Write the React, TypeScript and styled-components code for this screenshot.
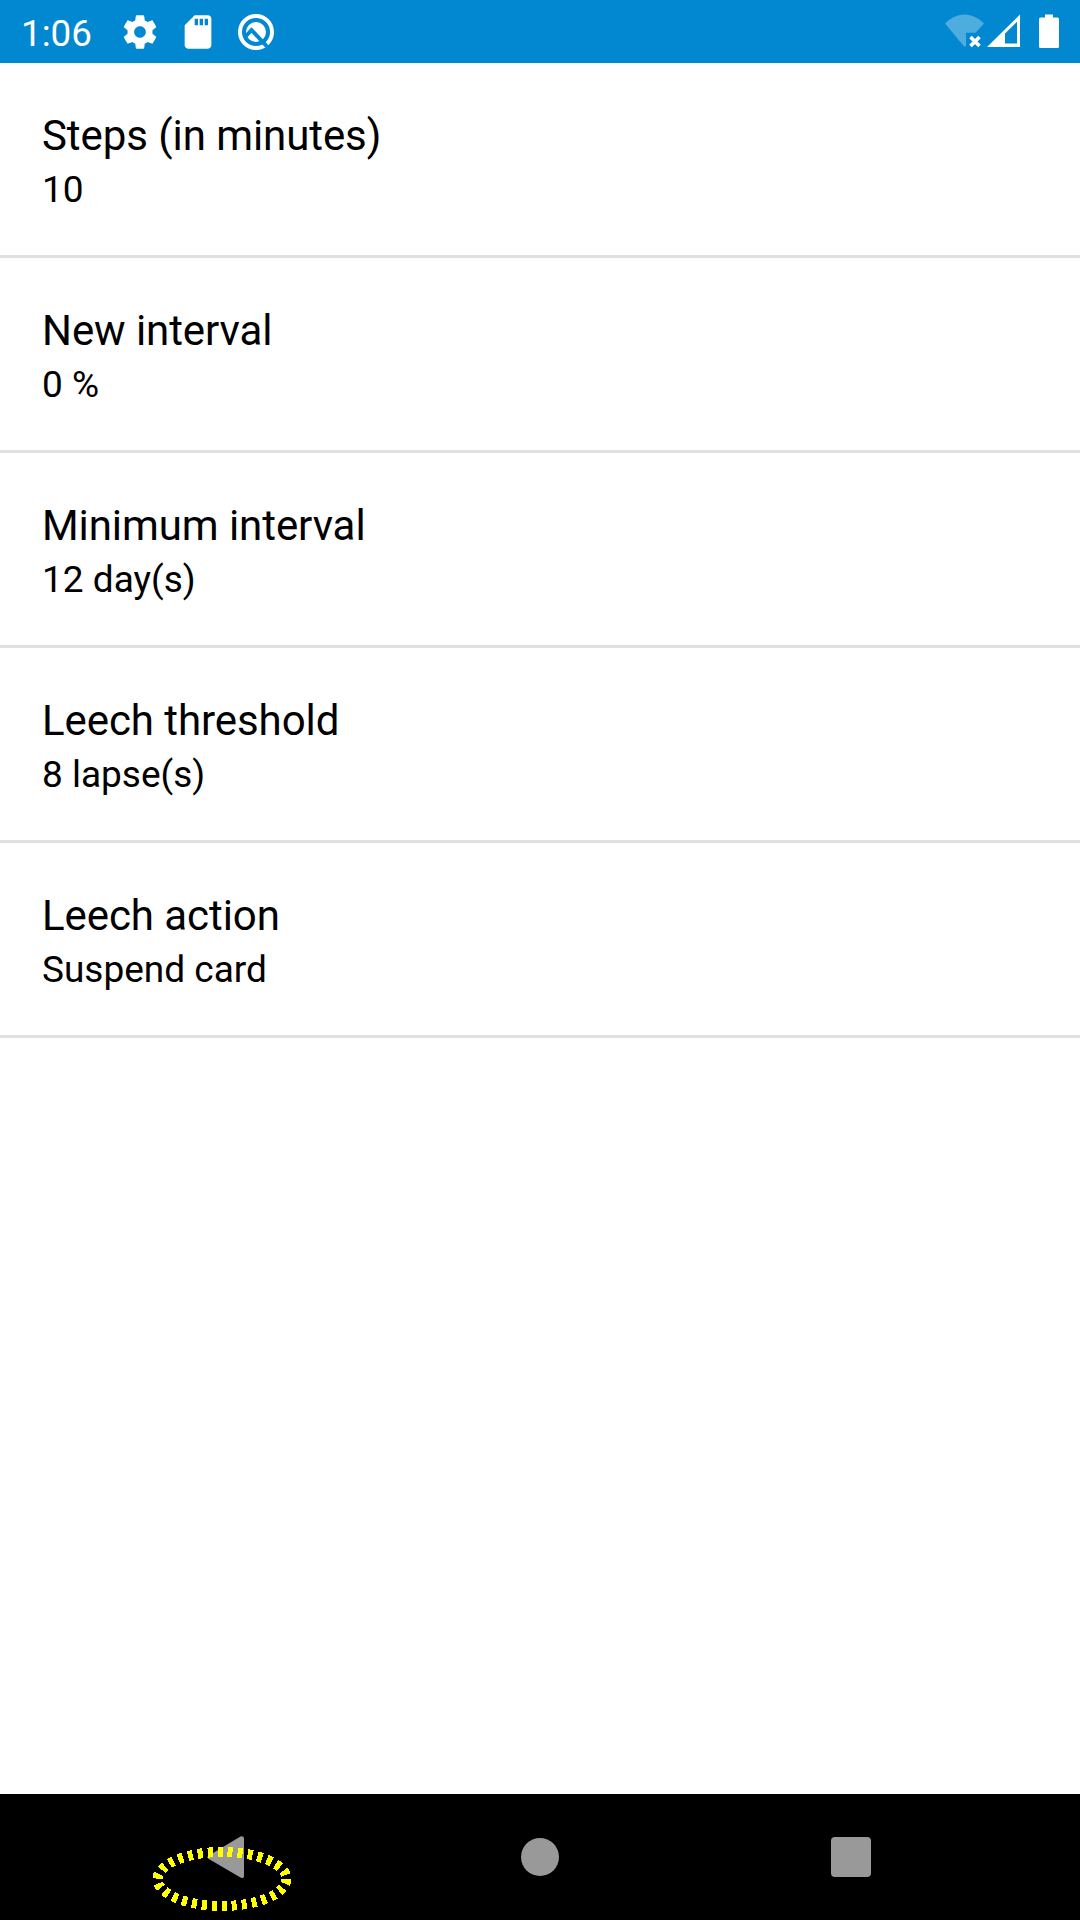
import React from "react";
import styled, { createGlobalStyle } from "styled-components";

const GlobalStyle = createGlobalStyle`
  *, *::before, *::after { box-sizing: border-box; }
  body { margin: 0; background: #fff; }
`;

const Screen = styled.div`
  display: flex;
  flex-direction: column;
  width: 1080px;
  height: 1920px;
  background: #fff;
  color: #000;
  font-family: Roboto, "Noto Sans", sans-serif;
  overflow: hidden;
`;

const StatusBar = styled.header`
  display: flex;
  align-items: center;
  justify-content: space-between;
  height: 63px;
  flex: none;
  padding: 0 21px;
  background: #0288d1;
  color: #fff;
`;

const StatusGroup = styled.div`
  display: flex;
  align-items: center;
  height: 63px;
`;

const Clock = styled.time`
  width: 99px;
  padding-top: 4px;
  font-size: 36.75px;
  line-height: 43px;
  white-space: nowrap;
`;

const StatusIcon = styled.svg<{ $width: number; $gap?: number }>`
  display: block;
  flex: none;
  width: ${(p) => p.$width}px;
  height: 40px;
  margin-left: ${(p) => p.$gap ?? 0}px;
`;

const List = styled.ul`
  flex: 1;
  margin: 0;
  padding: 0;
  list-style: none;
`;

const Preference = styled.li`
  display: flex;
  flex-direction: column;
  height: 195px;
  padding: 48px 42px 0;
  border-bottom: 3px solid #e0e0e0;
`;

const Title = styled.span`
  font-size: 42px;
  line-height: 50px;
  letter-spacing: -0.07px;
`;

const Summary = styled.span`
  margin-top: 7px;
  font-size: 37px;
  line-height: 44px;
`;

const NavBar = styled.nav`
  position: relative;
  display: flex;
  justify-content: center;
  flex: none;
  height: 126px;
  background: #000;
`;

const NavButton = styled.button`
  display: flex;
  align-items: center;
  justify-content: center;
  width: 311px;
  height: 126px;
  padding: 0;
  border: 0;
  background: none;
`;

const NavIcon = styled.svg`
  display: block;
  width: 60px;
  height: 60px;
  fill: #999;
`;

const TapMarker = styled.svg`
  position: absolute;
  left: 146px;
  top: 46px;
  width: 152px;
  height: 78px;
  pointer-events: none;
`;

const preferences = [
  { title: "Steps (in minutes)", summary: "10" },
  { title: "New interval", summary: "0 %" },
  { title: "Minimum interval", summary: "12 day(s)" },
  { title: "Leech threshold", summary: "8 lapse(s)" },
  { title: "Leech action", summary: "Suspend card" },
];

const GearIcon = () => (
  <StatusIcon $width={40} viewBox="0 0 24 24" fill="#fff">
    <path d="M19.43 12.98c.04-.32.07-.64.07-.98s-.03-.66-.07-.98l2.11-1.65c.19-.15.24-.42.12-.64l-2-3.46c-.12-.22-.39-.3-.61-.22l-2.49 1c-.52-.4-1.08-.73-1.69-.98l-.38-2.65C14.46 2.18 14.25 2 14 2h-4c-.25 0-.46.18-.49.42l-.38 2.65c-.61.25-1.17.59-1.69.98l-2.49-1c-.23-.09-.49 0-.61.22l-2 3.46c-.13.22-.07.49.12.64l2.11 1.65c-.04.32-.07.65-.07.98s.03.66.07.98l-2.11 1.65c-.19.15-.24.42-.12.64l2 3.46c.12.22.39.3.61.22l2.49-1c.52.4 1.08.73 1.69.98l.38 2.65c.03.24.24.42.49.42h4c.25 0 .46-.18.49-.42l.38-2.65c.61-.25 1.17-.59 1.69-.98l2.49 1c.23.09.49 0 .61-.22l2-3.46c.12-.22.07-.49-.12-.64l-2.11-1.65zM12 15.5c-1.93 0-3.5-1.57-3.5-3.5s1.57-3.5 3.5-3.5 3.5 1.57 3.5 3.5-1.57 3.5-3.5 3.5z" />
  </StatusIcon>
);

const SdCardIcon = () => (
  <StatusIcon $width={40} $gap={18} viewBox="0 0 24 24" fill="#fff">
    <path d="M18 2h-8L4.02 8 4 20c0 1.100.9 2 2 2h12c1.100 0 2-.9 2-2V4c0-1.100-.9-2-2-2zm-6 6h-2V4h2v4zm3 0h-2V4h2v4zm3 0h-2V4h2v4z" />
  </StatusIcon>
);

const SearchBadgeIcon = () => (
  <StatusIcon $width={40} $gap={18} viewBox="0 0 40 40">
    <circle cx="20" cy="20" r="16" fill="none" stroke="#fff" strokeWidth="4" />
    <circle cx="20" cy="20" r="10" fill="#fff" />
    <path d="M9.5 24.500L15.500 18L30.500 34" fill="none" stroke="#0288d1" strokeWidth="3.900" />
    <path d="M27 30.300L35 38.800" stroke="#0288d1" strokeWidth="3" />
  </StatusIcon>
);

const WifiOffIcon = () => (
  <StatusIcon $width={40} viewBox="0 0 40 40">
    <path d="M0 11.500C5.500 6 12 2.500 19.500 2.500S33.500 6 39 11.500L30.500 20.700H21V33.500L19.500 35Z" fill="#fff" fillOpacity="0.3" />
    <path d="M25.500 25L34.500 34M34.500 25L25.500 34" stroke="#fff" strokeWidth="3.600" />
  </StatusIcon>
);

const SignalIcon = () => (
  <StatusIcon $width={33} $gap={2} viewBox="0 0 33 40">
    <path d="M0 35L33 2.500V35ZM18 21.500V31.500H30V9.800Z" fill="#fff" fillRule="evenodd" />
  </StatusIcon>
);

const BatteryIcon = () => (
  <StatusIcon $width={20} $gap={19} viewBox="0 0 20 40" fill="#fff">
    <path d="M6 2.500H14V5.500H18.500Q20 5.500 20 7V34.500Q20 36 18.500 36H1.500Q0 36 0 34.500V7Q0 5.500 1.500 5.500H6Z" />
  </StatusIcon>
);

export default function App() {
  return (
    <Screen>
      <GlobalStyle />
      <StatusBar>
        <StatusGroup>
          <Clock>1:06</Clock>
          <GearIcon />
          <SdCardIcon />
          <SearchBadgeIcon />
        </StatusGroup>
        <StatusGroup>
          <WifiOffIcon />
          <SignalIcon />
          <BatteryIcon />
        </StatusGroup>
      </StatusBar>
      <List>
        {preferences.map(({ title, summary }) => (
          <Preference key={title}>
            <Title>{title}</Title>
            <Summary>{summary}</Summary>
          </Preference>
        ))}
      </List>
      <NavBar>
        <NavButton aria-label="Back">
          <NavIcon viewBox="0 0 60 60">
            <path d="M9 29Q7.500 30.200 9 31.500L41.500 50.500Q45 52 45 49V12Q45 8.500 41.500 9.500Z" />
          </NavIcon>
        </NavButton>
        <NavButton aria-label="Home">
          <NavIcon viewBox="0 0 60 60">
            <circle cx="30" cy="30" r="19" />
          </NavIcon>
        </NavButton>
        <NavButton aria-label="Overview">
          <NavIcon viewBox="0 0 60 60">
            <rect x="10" y="10" width="40" height="40" rx="4" />
          </NavIcon>
        </NavButton>
        <TapMarker viewBox="0 0 152 78">
          <ellipse
            cx="76"
            cy="39"
            rx="64.5"
            ry="27"
            fill="none"
            stroke="#ff0"
            strokeWidth="10"
            strokeDasharray="5 5"
            shapeRendering="crispEdges"
          />
        </TapMarker>
      </NavBar>
    </Screen>
  );
}
